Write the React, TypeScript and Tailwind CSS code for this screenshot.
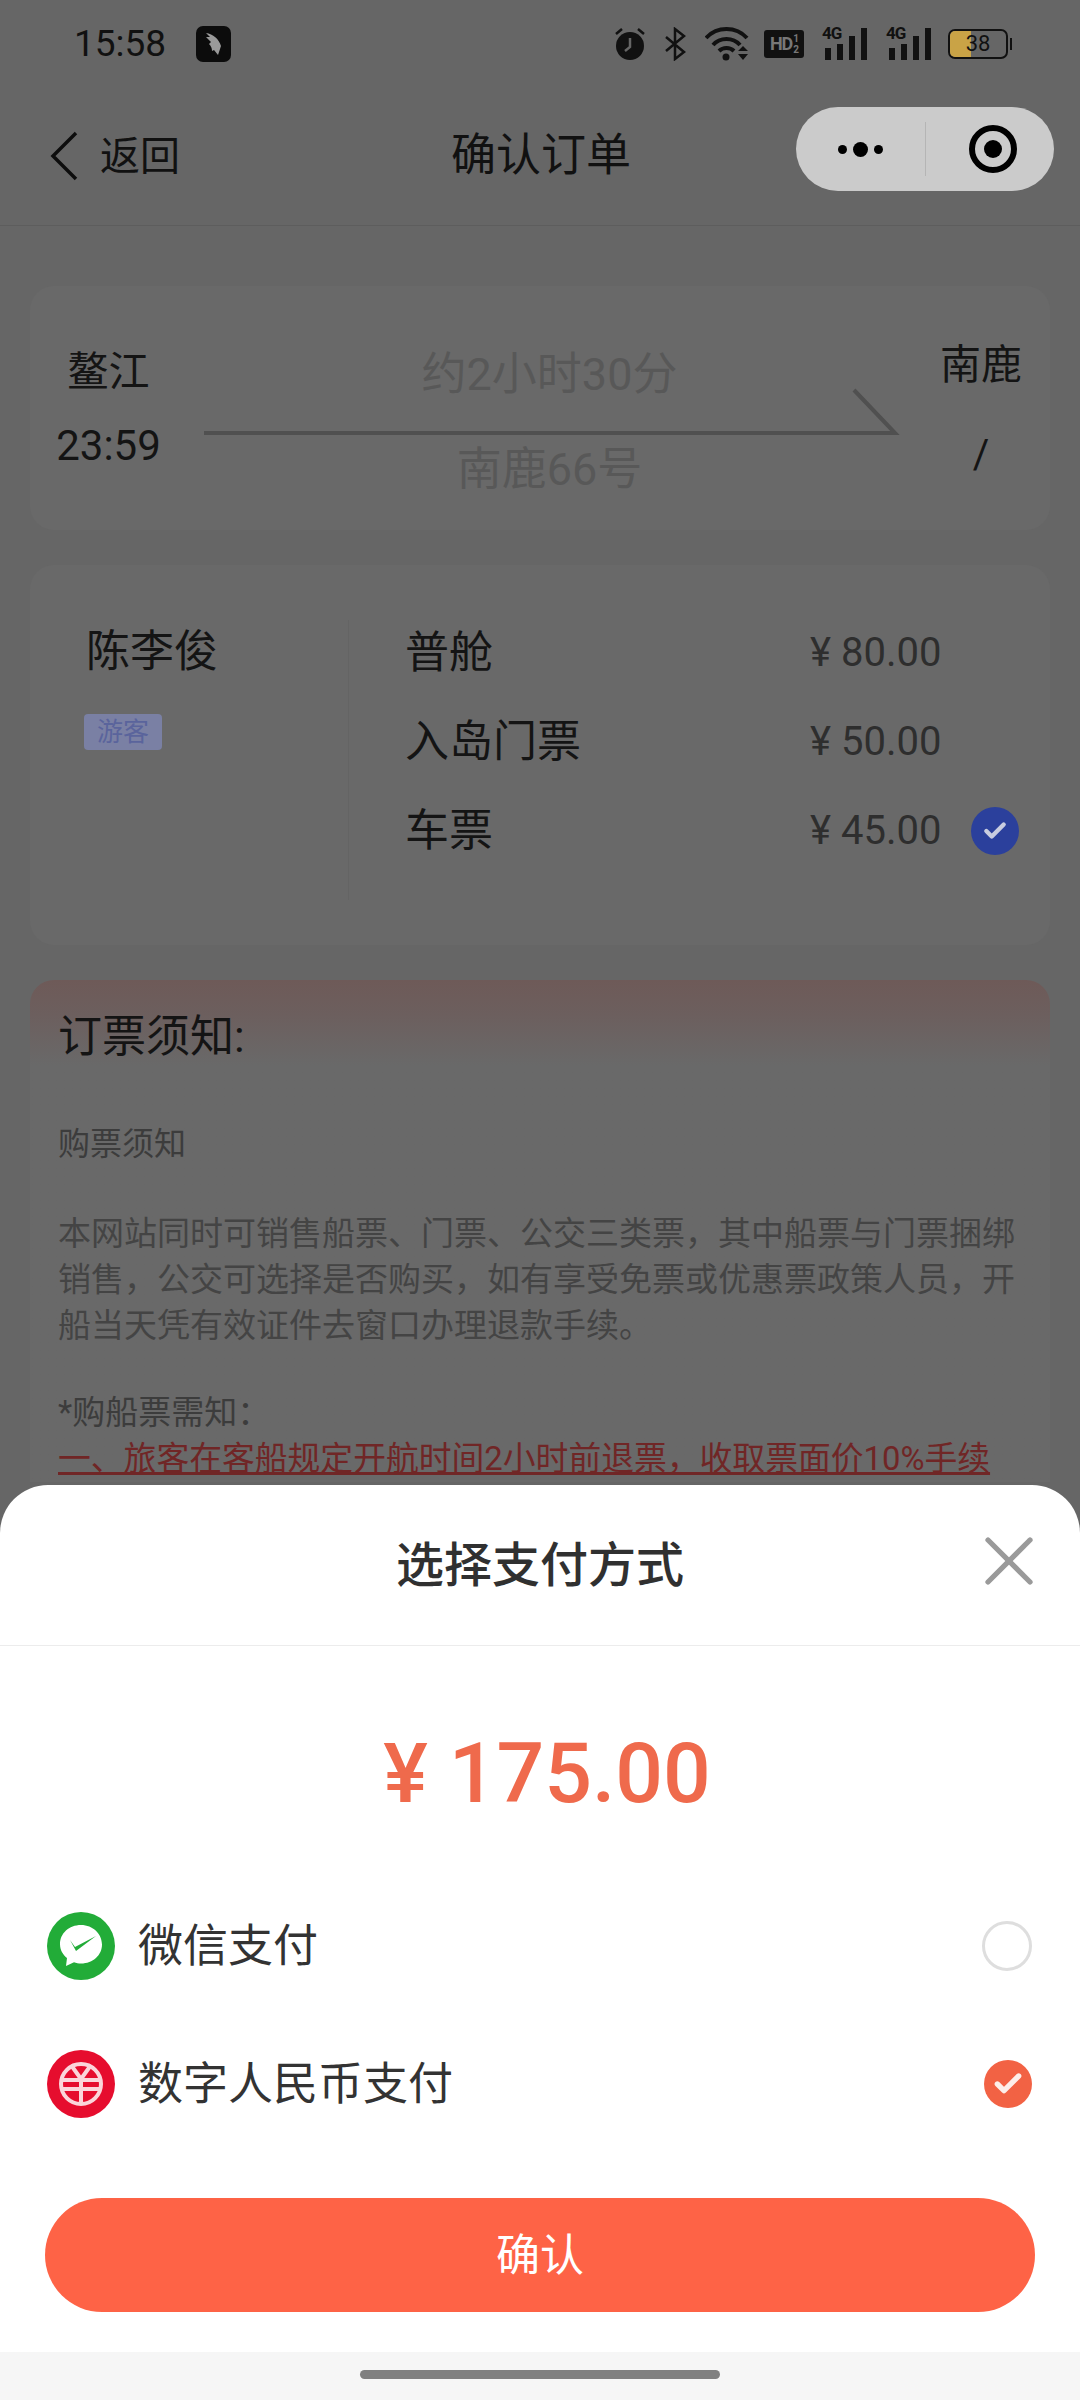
import { Check, X } from "lucide-react";

const font = { fontFamily: 'Roboto, "Noto Sans CJK SC", sans-serif' };

const tickets = [
  { name: "普舱", price: "¥ 80.00" },
  { name: "入岛门票", price: "¥ 50.00" },
  { name: "车票", price: "¥ 45.00", checked: true },
];

function SignalIcon() {
  return (
    <div className="relative h-[34px] w-[46px]">
      <span className="absolute -top-[4px] left-0 text-[17px] leading-[20px] font-bold tracking-[-1px] text-[#111]">4G</span>
      <svg viewBox="0 0 46 34" className="h-[34px] w-[46px]" fill="#111">
        <rect x="3" y="21" width="6" height="12" />
        <rect x="15" y="17" width="6" height="16" />
        <rect x="27" y="9" width="6" height="24" />
        <rect x="39" y="1" width="6" height="32" />
      </svg>
    </div>
  );
}

function StatusBar() {
  return (
    <div className="flex h-[88px] items-center pl-[74px] pr-[68px]">
      <span className="text-[37px] leading-[40px] text-[#111]">15:58</span>
      <div className="ml-[30px] flex h-[36px] w-[35px] items-center justify-center rounded-[7px] bg-[#0c0c0c]">
        <svg viewBox="0 0 24 30" className="h-[30px] w-[24px]" fill="#9a9a9a">
          <path d="M4 4c7 1 13 6 15 13l-3 9-4-5-2 1c0-3-1-5-3-7l2-2-5-5 4 0z" />
        </svg>
      </div>
      <div className="ml-auto flex items-center">
        <svg viewBox="0 0 32 34" className="h-[34px] w-[32px]">
          <circle cx="16" cy="19" r="14" fill="#111" />
          <path d="M16 11v9l-5 4" stroke="#666" strokeWidth="2.5" fill="none" />
          <path d="M2 7l6-5M30 7l-6-5" stroke="#111" strokeWidth="2.5" />
        </svg>
        <svg viewBox="0 0 24 34" className="ml-[17px] h-[34px] w-[24px]" fill="none" stroke="#111" strokeWidth="2.5">
          <path d="M3 10l18 15-9 7V2l9 7L3 24" />
        </svg>
        <svg viewBox="0 0 44 34" className="ml-[18px] h-[34px] w-[44px]">
          <path d="M1 11c11-12 30-12 41 0M8 18c7-8 20-8 27 0M14 24c4-4 11-4 15 0" stroke="#111" strokeWidth="4" fill="none" />
          <circle cx="21" cy="30" r="3.5" fill="#111" />
          <path d="M33 24l5-5 5 5zM33 27h10l-5 6z" fill="#111" />
        </svg>
        <div className="ml-[15px] flex h-[28px] w-[40px] items-center justify-center rounded-[3px] bg-[#111] text-[18px] leading-none font-bold tracking-[-1px] text-[#777]">
          HD
          <span className="ml-[1px] flex flex-col text-[10px] leading-[11px]">
            <span>1</span>
            <span>2</span>
          </span>
        </div>
        <div className="ml-[18px]">
          <SignalIcon />
        </div>
        <div className="ml-[18px]">
          <SignalIcon />
        </div>
        <div className="ml-[16px] flex items-center">
          <div className="relative h-[30px] w-[60px] overflow-hidden rounded-[7px] border-2 border-[#111]">
            <div className="h-full w-[21px] bg-[#c9a346]" />
            <span className="absolute inset-0 flex items-center justify-center text-[22px] leading-none text-[#111]">38</span>
          </div>
          <div className="ml-[2px] h-[12px] w-[2px] bg-[#111]" />
        </div>
      </div>
    </div>
  );
}

function NavBar() {
  return (
    <div className="relative flex h-[138px] items-center border-b border-[#5d5d5d] pl-[50px]">
      <svg viewBox="0 0 28 50" className="mb-[2px] h-[50px] w-[28px]" fill="none" stroke="#0d0d0d" strokeWidth="3.5">
        <path d="M26 2L3 25l23 23" />
      </svg>
      <span className="ml-[22px] text-[40px] leading-[50px] text-[#111]">返回</span>
      <span className="absolute left-[451px] top-[41px] text-[45px] leading-[54px] text-[#111]">确认订单</span>
      <div className="absolute left-[796px] top-[19px] flex h-[84px] w-[258px] items-center rounded-[42px] bg-[#cbcbcb]">
        <div className="flex w-[129px] items-center justify-center gap-[6px]">
          <div className="h-[9px] w-[9px] rounded-full bg-black" />
          <div className="h-[15px] w-[15px] rounded-full bg-black" />
          <div className="h-[9px] w-[9px] rounded-full bg-black" />
        </div>
        <div className="h-[54px] w-px bg-[#b5b5b5]" />
        <div className="ml-[43px] flex h-[48px] w-[48px] items-center justify-center rounded-full border-[6px] border-black">
          <div className="h-[18px] w-[18px] rounded-full bg-black" />
        </div>
      </div>
    </div>
  );
}

function RouteCard() {
  return (
    <div className="mx-[30px] mt-[60px] flex h-[244px] rounded-[24px] bg-[#696969] pl-[27px]">
      <div className="flex w-[103px] flex-col items-center pt-[61px] text-[#141414]">
        <span className="text-[41px] leading-[50px]">鳌江</span>
        <span className="mt-[24px] text-[42px] leading-[50px]">23:59</span>
      </div>
      <div className="ml-[44px] flex w-[691px] flex-col items-center pt-[64px] text-[45px] leading-[50px] text-[#585858]">
        <span>约2小时30分</span>
        <svg viewBox="0 0 691 4" className="mt-[31px] h-[4px] w-[691px] overflow-visible" fill="none" stroke="#505050" strokeWidth="4">
          <path d="M0 2h691L650-41" />
        </svg>
        <span className="mt-[10px]">南鹿66号</span>
      </div>
      <div className="ml-[44px] flex w-[84px] flex-col items-center pt-[54px] text-[#141414]">
        <span className="whitespace-nowrap text-[41px] leading-[50px]">南鹿</span>
        <span className="mt-[40px] text-[40px] leading-[50px]">/</span>
      </div>
    </div>
  );
}

function TicketCard() {
  return (
    <div className="mx-[30px] mt-[35px] flex h-[380px] rounded-[24px] bg-[#696969] pl-[56px]">
      <div className="w-[262px] pt-[62px]">
        <div className="text-[44px] leading-[50px] text-[#141414]">陈李俊</div>
        <div className="-ml-[2px] mt-[37px] flex h-[36px] w-[78px] items-center justify-center rounded-[4px] bg-[#7a80a4] text-[26px] leading-none text-[#5a649c]">
          游客
        </div>
      </div>
      <div className="mt-[55px] h-[280px] w-px bg-[#646464]" />
      <div className="ml-[56px] mt-[43px] flex flex-col">
        {tickets.map((t) => (
          <div key={t.name} className="flex h-[89px] items-center">
            <span className="w-[405px] text-[44px] leading-[50px] text-[#141414]">{t.name}</span>
            <span className="w-[161px] text-[40px] leading-[50px] text-[#2e2e2e]">{t.price}</span>
            {t.checked && (
              <div className="flex h-[48px] w-[48px] items-center justify-center rounded-full bg-[#2b409c]">
                <Check className="h-[26px] w-[26px] text-[#c9cde0]" strokeWidth={4} />
              </div>
            )}
          </div>
        ))}
      </div>
    </div>
  );
}

function NoticeCard() {
  return (
    <div className="mx-[30px] mt-[35px] rounded-t-[24px] bg-gradient-to-b from-[#6e5a58] from-0% via-[#6c5f5e] via-[7%] to-[#696969] to-[17%] px-[28px] pt-[30px]">
      <div className="text-[44px] leading-[54px] text-[#141414]">订票须知:</div>
      <div className="mt-[57px] text-[32px] leading-[46px] text-[#3c3c3c]">购票须知</div>
      <div className="mt-[44px] text-[33px] leading-[46px] text-[#444]">
        本网站同时可销售船票、门票、公交三类票，其中船票与门票捆绑销售，公交可选择是否购买，如有享受免票或优惠票政策人员，开船当天凭有效证件去窗口办理退款手续。
      </div>
      <div className="mt-[41px] text-[33px] leading-[46px] text-[#3c3c3c]">*购船票需知：</div>
      <div className="whitespace-nowrap text-[32.8px] leading-[46px] text-[#702626] underline">
        一、旅客在客船规定开航时间2小时前退票，收取票面价10%手续
      </div>
    </div>
  );
}

function WechatIcon() {
  return (
    <svg viewBox="0 0 68 68" className="h-[68px] w-[68px]">
      <circle cx="34" cy="34" r="34" fill="#22ac38" />
      <path d="M34 13c-12 0-21 8.500-21 19 0 6 2.800 10.500 7 14L19 54l8-3.800c2.200.8 4.600 1.300 7 1.300 12 0 21-8.500 21-19S46 13 34 13z" fill="#fff" />
      <path d="M23 28l5 7 21-11-20 15-6-11z" fill="#22ac38" />
    </svg>
  );
}

function YuanIcon() {
  return (
    <svg viewBox="0 0 68 68" className="h-[68px] w-[68px]">
      <circle cx="34" cy="34" r="34" fill="#e60d2e" />
      <g fill="none" stroke="#fbd5da" strokeWidth="4">
        <circle cx="34" cy="34" r="20" />
        <path d="M24 15l10 14 10-14M34 29v25M16 30h36M16 39h36" />
      </g>
    </svg>
  );
}

function PaySheet() {
  return (
    <div className="absolute inset-x-0 top-[1485px] flex h-[915px] flex-col rounded-t-[48px] bg-white">
      <div className="relative flex h-[161px] items-center justify-center border-b border-[#ececec] pt-[2px]">
        <span className="text-[48px] leading-[60px] font-medium text-[#303030]">选择支付方式</span>
        <X className="absolute left-[967px] top-[34px] h-[84px] w-[84px] text-[#9a9a9a]" strokeWidth={1.5} />
      </div>
      <div className="mt-[78px] flex h-[100px] items-center justify-center pl-[14px] text-[84px] leading-[100px] font-medium text-[#ef6a4c]">
        ¥ 175.00
      </div>
      <div className="mt-[53px] flex h-[138px] items-center pl-[47px] pr-[47px]">
        <WechatIcon />
        <span className="ml-[23px] pt-[2px] text-[45px] leading-[56px] text-[#333]">微信支付</span>
        <div className="ml-auto mr-[1px] h-[50px] w-[50px] rounded-full border-[3px] border-[#dedede]" />
      </div>
      <div className="flex h-[138px] items-center pl-[47px] pr-[48px]">
        <YuanIcon />
        <span className="ml-[23px] pt-[2px] text-[45px] leading-[56px] text-[#333]">数字人民币支付</span>
        <div className="ml-auto flex h-[48px] w-[48px] items-center justify-center rounded-full bg-[#f26244]">
          <Check className="h-[32px] w-[32px] text-[#fdeee9]" strokeWidth={4} />
        </div>
      </div>
      <div className="mx-[45px] mt-[45px] flex h-[114px] items-center justify-center rounded-full bg-[#fe6346] pt-[2px] text-[44px] leading-[56px] text-white">
        确认
      </div>
      <div className="mt-auto flex h-[48px] justify-center bg-[#f6f6f6] pt-[18px]">
        <div className="h-[9px] w-[360px] rounded-full bg-[#808080]" />
      </div>
    </div>
  );
}

export default function App() {
  return (
    <div className="relative h-[2400px] w-[1080px] overflow-hidden bg-[#666]" style={font}>
      <StatusBar />
      <NavBar />
      <RouteCard />
      <TicketCard />
      <NoticeCard />
      <PaySheet />
    </div>
  );
}
